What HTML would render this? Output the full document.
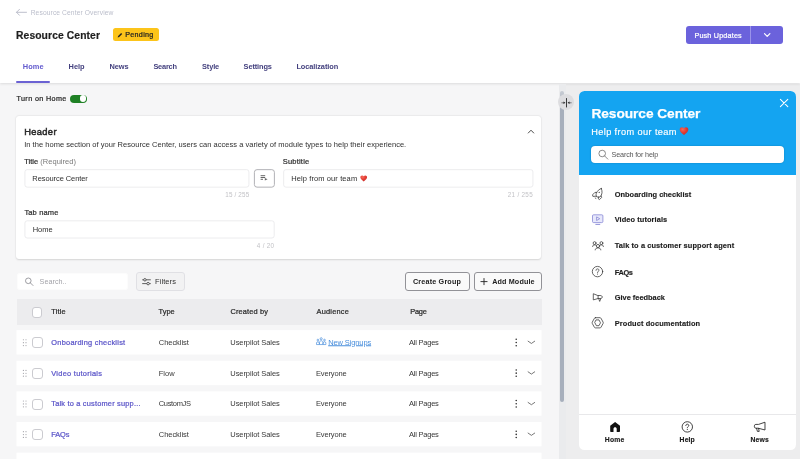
<!DOCTYPE html>
<html lang="en"><head>
<meta charset="utf-8">
<title>Resource Center</title>
<style>
*{box-sizing:border-box;margin:0;padding:0}
html,body{width:800px;height:459px;overflow:hidden}
body{font-family:"Liberation Sans","DejaVu Sans",sans-serif;background:#f6f6f7;color:#333;position:relative;font-size:7.2px}
.abs{position:absolute;white-space:nowrap}
.t{position:absolute;white-space:nowrap;line-height:1;transform:translateY(-50%);margin-top:.8px}
.sb{-webkit-text-stroke:.22px currentColor}
#hdr{left:0;top:0;width:800px;height:83px;background:#fff;box-shadow:0 .5px 2.5px rgba(0,0,0,.11)}
.tab{font-weight:bold;font-size:7.4px;color:#44417f}
.card{background:#fff;border-radius:3px;box-shadow:0 .6px 2px rgba(0,0,0,.13),0 0 2px rgba(0,0,0,.07)}
.inp{background:#fff;border:1px solid #eeeeef;border-radius:2.5px}
.lbl{font-size:7.5px;color:#303030}
.cnt{font-size:6.3px;color:#c2c2c6}
.btn{background:#fafafa;border:1px solid #929297;border-radius:3px}
.row{left:16.5px;width:525px;height:24.4px;background:#fff}
.cell{font-size:7.5px;color:#383838}
.hc{font-size:7.4px;color:#2a2a2a}
.lnk{font-size:7.4px;color:#5a54c8}
.cb{width:10.9px;height:10.9px;border:1px solid #cbcbd0;border-radius:3px;background:#fff}
.li{font-weight:bold;font-size:7.4px;color:#1e1e1e;-webkit-text-stroke:.15px #1e1e1e}
.ft{font-weight:bold;font-size:6.8px;color:#1c1c1c;-webkit-text-stroke:.15px #1c1c1c}
</style>
</head>
<body>
<div id="app" style="position:absolute;left:0;top:0;width:800px;height:459px;will-change:transform">

<!-- ===== top header ===== -->
<div class="abs" id="hdr"></div>
<svg class="abs" style="left: 15px; top: 8px;" width="13" height="9" viewBox="-0.5 -0.3 13 9"><path d="M4 1 L1 4 L4 7 M1 4 H11" fill="none" stroke="#b5b8c6" stroke-width=".9" stroke-linecap="round" stroke-linejoin="round"></path></svg>
<div class="t" style="left: 30.7px; top: 12.3px; font-size: 6.7px; color: rgb(187, 190, 203); letter-spacing: 0.105px;">Resource Center Overview</div>
<div class="t" style="left: 16px; top: 35.2px; font-size: 10.3px; font-weight: bold; color: rgb(31, 31, 31); -webkit-text-stroke: 0.2px rgb(31, 31, 31); letter-spacing: 0.11px;">Resource Center</div>
<div class="abs" style="left:113.4px;top:28.1px;width:46px;height:13.4px;background:#fcc41a;border-radius:2.5px"></div>
<svg class="abs" style="left: 117px; top: 32px;" width="7" height="7" viewBox="-0.2 0 7 7"><path d="M0.5 5.5 L0.9 4 L3.9 1 L5 2.1 L2 5.1 Z" fill="#222"></path></svg>
<div class="t sb" style="left: 125.2px; top: 34.2px; font-size: 7.2px; color: rgb(34, 34, 34); letter-spacing: 0.294px;">Pending</div>

<div class="abs" style="left:686.2px;top:25.7px;width:97px;height:18.3px;background:#6b62dc;border-radius:3px"></div>
<div class="abs" style="left:749.7px;top:25.7px;width:.8px;height:18.3px;background:#9a93ea"></div>
<div class="t sb" style="left: 694.4px; top: 35.1px; font-size: 7.2px; color: rgb(255, 255, 255); letter-spacing: 0.195px;">Push Updates</div>
<svg class="abs" style="left: 763px; top: 32px;" width="9" height="7" viewBox="-0.2 -0.2 9 7"><path d="M1.3 1.4 L4 4.2 L6.7 1.4" fill="none" stroke="#fff" stroke-width="1.2" stroke-linecap="round" stroke-linejoin="round"></path></svg>

<div class="t tab" style="left: 22.8px; top: 66.4px; color: rgb(98, 90, 206); letter-spacing: 0.058px;">Home</div>
<div class="t tab" style="left: 68.6px; top: 66.4px; letter-spacing: -0.004px;">Help</div>
<div class="t tab" style="left: 109.6px; top: 66.4px; letter-spacing: -0.089px;">News</div>
<div class="t tab" style="left: 153.4px; top: 66.4px; letter-spacing: -0.21px;">Search</div>
<div class="t tab" style="left: 202.1px; top: 66.4px; letter-spacing: -0.149px;">Style</div>
<div class="t tab" style="left: 243.6px; top: 66.4px; letter-spacing: -0.121px;">Settings</div>
<div class="t tab" style="left: 296.4px; top: 66.4px; letter-spacing: -0.084px;">Localization</div>
<div class="abs" style="left:16.3px;top:80.7px;width:33.5px;height:2.1px;background:#6b62d3;border-radius:1px"></div>

<!-- ===== left panel ===== -->
<div class="t sb" style="left: 16.5px; top: 98.4px; font-size: 7.2px; color: rgb(38, 38, 38); letter-spacing: 0.375px;">Turn on Home</div>
<div class="abs" style="left:70.3px;top:94.6px;width:17px;height:8.4px;border-radius:4.2px;background:#1f8125"></div>
<div class="abs" style="left:79.7px;top:95.4px;width:6.8px;height:6.8px;border-radius:50%;background:#fff"></div>

<div class="abs card" style="left:16.2px;top:116.3px;width:525.3px;height:143.2px"></div>
<div class="t" style="left: 24.2px; top: 131.9px; font-size: 9.3px; color: rgb(42, 42, 42); -webkit-text-stroke: 0.5px rgb(42, 42, 42); letter-spacing: 0.364px;">Header</div>
<div class="t" style="left: 24.2px; top: 144.4px; font-size: 7.5px; color: rgb(48, 48, 48); letter-spacing: 0.031px;">In the home section of your Resource Center, users can access a variety of module types to help their experience.</div>
<svg class="abs" style="left: 527px; top: 128px;" width="9" height="7" viewBox="0 -0.4 9 7"><path d="M1.3 4.6 L4 1.8 L6.7 4.6" fill="none" stroke="#3a3a3a" stroke-width=".9" stroke-linecap="round" stroke-linejoin="round"></path></svg>

<svg class="abs" style="left:0;top:160px" width="560" height="90" viewBox="0 160 560 90"><g fill="#fff" stroke="#e7e7ea" stroke-width=".8"><rect x="24.9" y="169.65" width="224" height="17.5" rx="2.3"></rect><rect x="283.65" y="169.65" width="249.3" height="17.5" rx="2.3"></rect><rect x="24.9" y="220.8" width="249.3" height="17.2" rx="2.3"></rect><rect x="254.4" y="169.65" width="20" height="17.5" rx="2.6" stroke="#a9a9ae" stroke-width=".9"></rect></g></svg>
<div class="t lbl" style="left: 24.2px; top: 161.4px; letter-spacing: 0.021px;"><span class="sb">Title</span> <span style="color:#7a7a7a">(Required)</span></div>
<div class="t lbl" style="left: 32.3px; top: 178.7px; letter-spacing: -0.083px;">Resource Center</div>
<svg class="abs" style="left: 260px; top: 174px;" width="9" height="7" viewBox="-0.2 -0.8 9 7"><path d="M.4 .9 H5 M.4 2.7 H5 M.4 4.5 H2.8" fill="none" stroke="#666" stroke-width="1"></path><path d="M4.6 3.3 L7.4 4.5 L4.6 5.7 Z" fill="#666"></path></svg>
<div class="t cnt" style="left: 225.3px; top: 194.6px; letter-spacing: 0.165px;">15 / 255</div>

<div class="t lbl sb" style="left: 282.8px; top: 161.4px; letter-spacing: 0.196px;">Subtitle</div>
<div class="t lbl" style="left: 291.2px; top: 178.7px; letter-spacing: 0.103px;">Help from our team</div>
<svg class="abs" style="left: 360px; top: 175px;" width="8" height="7.4" viewBox="-0.2857 -0.2812 11.4286 10.4063"><defs><radialGradient id="hg" cx="35%" cy="28%" r="80%"><stop offset="0" stop-color="#f4695a"></stop><stop offset=".55" stop-color="#e23a32"></stop><stop offset="1" stop-color="#c22b28"></stop></radialGradient></defs><path d="M5 8.8 C2 6.4 0.2 4.8 0.2 2.7 C0.2 1.2 1.4 0.2 2.7 0.2 C3.6 0.2 4.5 0.7 5 1.5 C5.5 0.7 6.4 0.2 7.3 0.2 C8.6 0.2 9.8 1.2 9.8 2.7 C9.8 4.8 8 6.4 5 8.8 Z" fill="url(#hg)"></path></svg>
<div class="t cnt" style="left: 507.8px; top: 194.6px; letter-spacing: 0.298px;">21 / 255</div>

<div class="t lbl sb" style="left: 24.4px; top: 212.3px; letter-spacing: 0.142px;">Tab name</div>
<div class="t lbl" style="left: 32.7px; top: 229.6px; letter-spacing: -0.004px;">Home</div>
<div class="t cnt" style="left: 256.8px; top: 244.9px; letter-spacing: 0.315px;">4 / 20</div>

<!-- search / filter row -->
<div class="abs inp" style="left:16.5px;top:272.9px;width:111.4px;height:17.5px;border-color:#fcfcfc"></div>
<svg class="abs" style="left: 24px; top: 277px;" width="10" height="10" viewBox="-0.7 -0.2 10 10"><circle cx="3.6" cy="3.6" r="2.8" fill="none" stroke="#8c8c92" stroke-width=".85"></circle><path d="M5.7 5.7 L8.3 8.3" stroke="#8c8c92" stroke-width=".85" stroke-linecap="round"></path></svg>
<div class="t" style="left: 39.6px; top: 281.4px; font-size: 7.2px; color: rgb(163, 163, 169); letter-spacing: 0.029px;">Search..</div>
<div class="abs" style="left:136.2px;top:272.3px;width:48.8px;height:18.7px;background:#f2f2f3;border:1px solid #e0e0e4;border-radius:3px"></div>
<svg class="abs" style="left: 142px; top: 277px;" width="10" height="10" viewBox="0 -0.2 10 10"><path d="M.6 2.6 H8.4 M.6 6.4 H8.4" stroke="#444" stroke-width=".85" stroke-linecap="round"></path><circle cx="2.9" cy="2.6" r="1.25" fill="#f2f2f3" stroke="#444" stroke-width=".85"></circle><circle cx="6.1" cy="6.4" r="1.25" fill="#f2f2f3" stroke="#444" stroke-width=".85"></circle></svg>
<div class="t" style="left: 155px; top: 281.4px; font-size: 7.5px; color: rgb(51, 51, 51); letter-spacing: 0.089px;">Filters</div>

<div class="abs btn" style="left:404.6px;top:272.3px;width:65.2px;height:18.7px"></div>
<div class="t" style="left: 413px; top: 281.4px; font-size: 7.2px; font-weight: bold; color: rgb(34, 34, 34); letter-spacing: 0.179px;">Create Group</div>
<div class="abs btn" style="left:473.8px;top:272.3px;width:68px;height:18.7px"></div>
<svg class="abs" style="left: 480px; top: 278px;" width="8" height="8" viewBox="-0.5 -0.1 8 8"><path d="M3.5 .4 V6.6 M.4 3.5 H6.6" stroke="#222" stroke-width=".9" stroke-linecap="round"></path></svg>
<div class="t" style="left: 492.2px; top: 281.4px; font-size: 7.2px; font-weight: bold; color: rgb(34, 34, 34); letter-spacing: 0.145px;">Add Module</div>

<!-- table header -->
<div class="abs" style="left:16.5px;top:299px;width:525px;height:25.6px;background:#ececee"></div>
<div class="abs cb" style="left:31.5px;top:307.2px"></div>
<div class="t hc sb" style="left: 51.3px; top: 311.2px; letter-spacing: 0.181px;">Title</div>
<div class="t hc sb" style="left: 158.6px; top: 311.2px; letter-spacing: -0.009px;">Type</div>
<div class="t hc sb" style="left: 230.5px; top: 311.2px; letter-spacing: 0.141px;">Created by</div>
<div class="t hc sb" style="left: 316.6px; top: 311.2px; letter-spacing: 0.19px;">Audience</div>
<div class="t hc sb" style="left: 410.2px; top: 311.2px; letter-spacing: -0.219px;">Page</div>

<!--ROWS-->
<svg class="abs" style="left: 16px; top: 329px;" width="527" height="28" viewBox="0 -0.1 527 28"><rect x=".5" y="1" width="525" height="24.4" fill="#fff"></rect></svg>
<svg class="abs" style="left: 22px; top: 338px;" width="6" height="9" viewBox="-0.4 -0.65 6 9"><g fill="#a2a2a8"><circle cx="1" cy="1.1" r=".6"></circle><circle cx="1" cy="4" r=".6"></circle><circle cx="1" cy="6.9" r=".6"></circle><circle cx="3.6" cy="1.1" r=".6"></circle><circle cx="3.6" cy="4" r=".6"></circle><circle cx="3.6" cy="6.9" r=".6"></circle></g></svg>
<div class="abs cb" style="left:31.7px;top:337.35px"></div>
<div class="t lnk sb" style="left: 51.3px; top: 342.25px; letter-spacing: 0.255px;">Onboarding checklist</div>
<div class="t cell" style="left: 158.8px; top: 342.25px; letter-spacing: -0.051px;">Checklist</div>
<div class="t cell" style="left: 230.3px; top: 342.25px; letter-spacing: -0.066px;">Userpilot Sales</div>
<svg class="abs" style="left: 316px; top: 337px;" width="11.4" height="9" viewBox="0 -0.15 11.4 9"><g fill="none" stroke="#4a8fdc" stroke-width=".7" stroke-linejoin="round"><circle cx="5.2" cy="1.6" r="1.05"></circle><path d="M3.5 7.4 V5.3 C3.5 4.3 4.2 3.6 5.2 3.6 C6.2 3.6 6.9 4.3 6.9 5.3 V7.4 Z"></path><circle cx="1.9" cy="2.9" r=".85"></circle><path d="M.5 7.4 V5.9 C.5 5.1 1.1 4.6 1.9 4.6 C2.7 4.6 3.3 5.1 3.3 5.9 V7.4 Z"></path><circle cx="8.5" cy="2.9" r=".85"></circle><path d="M7.1 7.4 V5.9 C7.1 5.1 7.7 4.6 8.5 4.6 C9.3 4.6 9.9 5.1 9.9 5.9 V7.4 Z"></path></g></svg>
<div class="t" style="left: 328.2px; top: 342.25px; font-size: 7.5px; color: rgb(74, 143, 220); text-decoration: underline 0.5px; text-underline-offset: 0.4px; letter-spacing: -0.115px;">New Signups</div>
<div class="t cell" style="left: 409px; top: 342.25px; letter-spacing: -0.228px;">All Pages</div>
<svg class="abs" style="left: 514px; top: 338px;" width="4" height="10" viewBox="-0.7 -0.05 4 10"><g fill="#2a2a2a"><circle cx="1.5" cy="1.25" r=".78"></circle><circle cx="1.5" cy="4.45" r=".78"></circle><circle cx="1.5" cy="7.65" r=".78"></circle></g></svg>
<svg class="abs" style="left: 527px; top: 340px;" width="10" height="6" viewBox="0 -0.25 10 6"><path d="M1.1 .95 L4.4 3.2 L7.7 .95" fill="none" stroke="#4a4a4a" stroke-width=".75" stroke-linecap="round" stroke-linejoin="round"></path></svg>
<svg class="abs" style="left: 16px; top: 359px;" width="527" height="28" viewBox="0 -0.73 527 28"><rect x=".5" y="1" width="525" height="24.4" fill="#fff"></rect></svg>
<svg class="abs" style="left: 22px; top: 369px;" width="6" height="9" viewBox="-0.4 -0.28 6 9"><g fill="#a2a2a8"><circle cx="1" cy="1.1" r=".6"></circle><circle cx="1" cy="4" r=".6"></circle><circle cx="1" cy="6.9" r=".6"></circle><circle cx="3.6" cy="1.1" r=".6"></circle><circle cx="3.6" cy="4" r=".6"></circle><circle cx="3.6" cy="6.9" r=".6"></circle></g></svg>
<div class="abs cb" style="left:31.7px;top:367.98px"></div>
<div class="t lnk sb" style="left: 51.3px; top: 372.88px; letter-spacing: 0.279px;">Video tutorials</div>
<div class="t cell" style="left: 158.8px; top: 372.88px; letter-spacing: -0.027px;">Flow</div>
<div class="t cell" style="left: 230.3px; top: 372.88px; letter-spacing: -0.066px;">Userpilot Sales</div>
<div class="t cell" style="left: 316px; top: 372.88px; letter-spacing: -0.158px;">Everyone</div>
<div class="t cell" style="left: 409px; top: 372.88px; letter-spacing: -0.228px;">All Pages</div>
<svg class="abs" style="left: 514px; top: 368px;" width="4" height="10" viewBox="-0.7 -0.68 4 10"><g fill="#2a2a2a"><circle cx="1.5" cy="1.25" r=".78"></circle><circle cx="1.5" cy="4.45" r=".78"></circle><circle cx="1.5" cy="7.65" r=".78"></circle></g></svg>
<svg class="abs" style="left: 527px; top: 370px;" width="10" height="6" viewBox="0 -0.88 10 6"><path d="M1.1 .95 L4.4 3.2 L7.7 .95" fill="none" stroke="#4a4a4a" stroke-width=".75" stroke-linecap="round" stroke-linejoin="round"></path></svg>
<svg class="abs" style="left: 16px; top: 390px;" width="527" height="28" viewBox="0 -0.36 527 28"><rect x=".5" y="1" width="525" height="24.4" fill="#fff"></rect></svg>
<svg class="abs" style="left: 22px; top: 399px;" width="6" height="9" viewBox="-0.4 -0.91 6 9"><g fill="#a2a2a8"><circle cx="1" cy="1.1" r=".6"></circle><circle cx="1" cy="4" r=".6"></circle><circle cx="1" cy="6.9" r=".6"></circle><circle cx="3.6" cy="1.1" r=".6"></circle><circle cx="3.6" cy="4" r=".6"></circle><circle cx="3.6" cy="6.9" r=".6"></circle></g></svg>
<div class="abs cb" style="left:31.7px;top:398.61px"></div>
<div class="t lnk sb" style="left: 51.3px; top: 403.51px; letter-spacing: 0.197px;">Talk to a customer supp...</div>
<div class="t cell" style="left: 158.8px; top: 403.51px; letter-spacing: -0.346px;">CustomJS</div>
<div class="t cell" style="left: 230.3px; top: 403.51px; letter-spacing: -0.066px;">Userpilot Sales</div>
<div class="t cell" style="left: 316px; top: 403.51px; letter-spacing: -0.158px;">Everyone</div>
<div class="t cell" style="left: 409px; top: 403.51px; letter-spacing: -0.228px;">All Pages</div>
<svg class="abs" style="left: 514px; top: 399px;" width="4" height="10" viewBox="-0.7 -0.31 4 10"><g fill="#2a2a2a"><circle cx="1.5" cy="1.25" r=".78"></circle><circle cx="1.5" cy="4.45" r=".78"></circle><circle cx="1.5" cy="7.65" r=".78"></circle></g></svg>
<svg class="abs" style="left: 527px; top: 401px;" width="10" height="6" viewBox="0 -0.51 10 6"><path d="M1.1 .95 L4.4 3.2 L7.7 .95" fill="none" stroke="#4a4a4a" stroke-width=".75" stroke-linecap="round" stroke-linejoin="round"></path></svg>
<svg class="abs" style="left: 16px; top: 420px;" width="527" height="28" viewBox="0 -0.99 527 28"><rect x=".5" y="1" width="525" height="24.4" fill="#fff"></rect></svg>
<svg class="abs" style="left: 22px; top: 430px;" width="6" height="9" viewBox="-0.4 -0.54 6 9"><g fill="#a2a2a8"><circle cx="1" cy="1.1" r=".6"></circle><circle cx="1" cy="4" r=".6"></circle><circle cx="1" cy="6.9" r=".6"></circle><circle cx="3.6" cy="1.1" r=".6"></circle><circle cx="3.6" cy="4" r=".6"></circle><circle cx="3.6" cy="6.9" r=".6"></circle></g></svg>
<div class="abs cb" style="left:31.7px;top:429.24px"></div>
<div class="t lnk sb" style="left: 51.3px; top: 434.14px; letter-spacing: -0.138px;">FAQs</div>
<div class="t cell" style="left: 158.8px; top: 434.14px; letter-spacing: -0.051px;">Checklist</div>
<div class="t cell" style="left: 230.3px; top: 434.14px; letter-spacing: -0.066px;">Userpilot Sales</div>
<div class="t cell" style="left: 316px; top: 434.14px; letter-spacing: -0.158px;">Everyone</div>
<div class="t cell" style="left: 409px; top: 434.14px; letter-spacing: -0.228px;">All Pages</div>
<svg class="abs" style="left: 514px; top: 429px;" width="4" height="10" viewBox="-0.7 -0.94 4 10"><g fill="#2a2a2a"><circle cx="1.5" cy="1.25" r=".78"></circle><circle cx="1.5" cy="4.45" r=".78"></circle><circle cx="1.5" cy="7.65" r=".78"></circle></g></svg>
<svg class="abs" style="left: 527px; top: 432px;" width="10" height="6" viewBox="0 -0.14 10 6"><path d="M1.1 .95 L4.4 3.2 L7.7 .95" fill="none" stroke="#4a4a4a" stroke-width=".75" stroke-linecap="round" stroke-linejoin="round"></path></svg>
<svg class="abs" style="left: 16px; top: 451px;" width="527" height="28" viewBox="0 -0.62 527 28"><rect x=".5" y="1" width="525" height="24.4" fill="#fff"></rect></svg>
<!--/ROWS-->

<!-- scrollbar + divider + right panel -->
<div class="abs" style="left:564px;top:84px;width:236px;height:375px;background:#ededee;z-index:-1"></div>
<div class="abs" style="left:558.5px;top:84px;width:7.4px;height:375px;background:#eaebed"></div>
<div class="abs" style="left:560.2px;top:91px;width:3.6px;height:311px;background:linear-gradient(#c6cbd3 0,#c0c5ce 5px,#a7afbc 16px);border-radius:2px"></div>
<div class="abs" style="left:558.3px;top:93.9px;width:16px;height:16px;border-radius:50%;background:#dddde0"></div>
<svg class="abs" style="left: 560px; top: 97px;" width="13" height="12" viewBox="-0.5 0 13 12"><path d="M6 1.1 V10.4" stroke="#1a1a1a" stroke-width=".85"></path><path d="M.9 5.8 H3.4 M11.1 5.8 H8.6" stroke="#222" stroke-width=".55"></path><path d="M3 4.5 L4.9 5.8 L3 7.1 Z M9 4.5 L7.1 5.8 L9 7.1 Z" fill="#222"></path></svg>

<!-- widget -->
<div class="abs" style="left:578.8px;top:91.2px;width:217px;height:358.5px;background:#fff;border-radius:5.5px;overflow:hidden">
  <div class="abs" style="left:0;top:0;width:217px;height:83.9px;background:#14a4f1"></div>
  <div class="abs" style="left:0;top:322.8px;width:217px;height:.8px;background:#e8e8ea"></div>
</div>
<div class="t" style="left: 591.4px; top: 113.2px; font-size: 13.7px; font-weight: bold; color: rgb(255, 255, 255); -webkit-text-stroke: 0.25px rgb(255, 255, 255); letter-spacing: -0.038px;">Resource Center</div>
<div class="t" style="left: 591.2px; top: 132px; font-size: 9.2px; color: rgb(255, 255, 255); -webkit-text-stroke: 0.15px rgb(255, 255, 255); letter-spacing: 0.392px;">Help from our team</div>
<svg class="abs" style="left: 679px; top: 127px;" width="10" height="9.1" viewBox="-0.5556 0 11.1111 10.1111"><path d="M5 8.8 C2 6.4 0.2 4.8 0.2 2.7 C0.2 1.2 1.4 0.2 2.7 0.2 C3.6 0.2 4.5 0.7 5 1.5 C5.5 0.7 6.4 0.2 7.3 0.2 C8.6 0.2 9.8 1.2 9.8 2.7 C9.8 4.8 8 6.4 5 8.8 Z" fill="url(#hg)"></path></svg>
<svg class="abs" style="left: 779px; top: 98px;" width="10" height="10" viewBox="-0.6 -0.5 10 10"><path d="M.8 .8 L8.2 8.2 M8.2 .8 L.8 8.2" stroke="#fff" stroke-width="1.05" stroke-linecap="round"></path></svg>
<div class="abs" style="left:590.7px;top:145.8px;width:193.5px;height:17.2px;background:#fff;border-radius:4px;box-shadow:0 0 1.5px rgba(0,0,0,.3)"></div>
<svg class="abs" style="left: 598px; top: 149px;" width="11" height="11" viewBox="-0.2 -0.5 11 11"><circle cx="4" cy="4" r="3.3" fill="none" stroke="#666" stroke-width=".75"></circle><path d="M6.4 6.4 L9.6 9.6" stroke="#666" stroke-width=".75" stroke-linecap="round"></path></svg>
<div class="t" style="left: 611.6px; top: 154.6px; font-size: 7.2px; color: rgb(85, 85, 85); letter-spacing: -0.155px;">Search for help</div>

<!--ICONS-->
<svg class="abs" style="left:590px;top:186px" width="14" height="16" viewBox="0 0 14 16"><g fill="none" stroke="#333" stroke-width=".75" stroke-linecap="round" stroke-linejoin="round"><path d="M11.3 2.5 C9.5 2.9 7 5 6.2 7.6 C5.9 8.8 6.2 10 6.9 11 L10 11 C11 10 11.8 8.5 12 6.5 C12.1 5 11.8 3.6 11.3 2.5 Z"></path><path d="M6.5 6.6 L5 6.3 L2.5 8.9 L2.9 10.4 L6.3 10.2"></path><path d="M8.7 11 L8.3 12.8 L9.5 13.6 L11.6 11.5 L11.2 9.9"></path><path d="M5.2 12 L5.9 12.4"></path></g><circle cx="9.2" cy="6.3" r=".65" fill="#333"></circle></svg>
<svg class="abs" style="left:591px;top:213px" width="14" height="13" viewBox="0 0 14 13"><rect x="1.5" y="1.8" width="10.4" height="7.8" rx="1.1" fill="#e7e8fb" stroke="#8182d3" stroke-width=".75"></rect><path d="M5.6 3.9 L8.7 5.7 L5.6 7.5 Z" fill="#f3f3fd" stroke="#6f71cc" stroke-width=".65" stroke-linejoin="round"></path><path d="M4.8 11.4 H8.8" stroke="#7375cf" stroke-width=".8" stroke-linecap="round"></path></svg>
<svg class="abs" style="left:591px;top:240px" width="14" height="11" viewBox="0 0 14 11"><g fill="none" stroke="#333" stroke-width=".75" stroke-linecap="round" stroke-linejoin="round"><circle cx="7" cy="6" r="1.6"></circle><path d="M4.2 9.9 C4.2 8.5 5.4 7.9 7 7.9 C8.6 7.9 9.8 8.5 9.8 9.9"></path><circle cx="3.6" cy="3.1" r="1.45"></circle><path d="M1.6 6.5 C1.6 5.4 2.4 4.9 3.6 4.9 C4.1 4.9 4.5 5 4.8 5.2"></path><circle cx="10.4" cy="3.1" r="1.45"></circle><path d="M12.4 6.5 C12.4 5.4 11.6 4.9 10.4 4.9 C9.9 4.9 9.5 5 9.2 5.2"></path></g></svg>
<svg class="abs" style="left: 591px; top: 265px;" width="13" height="13" viewBox="-0.5 -0.6 13 13"><circle cx="6" cy="6" r="5.2" fill="none" stroke="#333" stroke-width=".75" stroke-linecap="round" stroke-linejoin="round"></circle><path d="M4.5 4.7 C4.5 3.8 5.2 3.3 6 3.3 C6.9 3.3 7.5 3.9 7.5 4.6 C7.5 5.6 6 5.7 6 6.9" fill="none" stroke="#333" stroke-width=".75" stroke-linecap="round" stroke-linejoin="round"></path><circle cx="6" cy="8.5" r=".5" fill="#333"></circle></svg>
<svg class="abs" style="left: 592px; top: 293px;" width="12" height="10" viewBox="-0.5 -0.2 12 10"><g fill="none" stroke="#333" stroke-width=".75" stroke-linecap="round" stroke-linejoin="round"><path d="M.8 .9 V6.7 L5.6 5.3 H7.6 C8.9 5.3 9.8 4.6 9.8 3.8 C9.8 3 8.9 2.3 7.6 2.3 H5.6 Z"></path><path d="M5.6 2.3 V5.3"></path><path d="M6.2 5.5 L7.2 8.2 L8.3 5.4"></path></g></svg>
<svg class="abs" style="left: 591px; top: 317px;" width="13.4" height="12.6" viewBox="-0.5 0 13.4 12.6"><g fill="none" stroke="#333" stroke-width=".75" stroke-linecap="round" stroke-linejoin="round"><path d="M3.9 .7 H8.5 C8.9 .7 9.3 .9 9.5 1.3 L11.6 5.1 C11.8 5.5 11.8 6.1 11.6 6.5 L9.5 10.3 C9.3 10.7 8.9 10.9 8.5 10.9 H3.9 C3.5 10.9 3.1 10.7 2.9 10.3 L.8 6.5 C.6 6.1 .6 5.5 .8 5.1 L2.9 1.3 C3.1 .9 3.5 .7 3.9 .7 Z"></path><path d="M4.9 2.9 H7.5 L9 5.8 L7.5 8.7 H4.9 L3.4 5.8 Z"></path></g></svg>
<svg class="abs" style="left: 609px; top: 421px;" width="12" height="12" viewBox="-0.6 -0.4 12 12"><path d="M5.5 .5 L.6 4.3 V9.6 C.6 10.2 1 10.6 1.6 10.6 H3.9 V7.4 C3.9 6.5 4.6 5.9 5.5 5.9 C6.4 5.9 7.1 6.5 7.1 7.4 V10.6 H9.4 C10 10.6 10.4 10.2 10.4 9.6 V4.3 Z" fill="#111"></path></svg>
<svg class="abs" style="left: 681px; top: 420px;" width="13" height="13" viewBox="-0.3 -0.9 13 13"><circle cx="6" cy="6" r="5.2" fill="none" stroke="#222" stroke-width=".85"></circle><path d="M4.5 4.7 C4.5 3.8 5.2 3.3 6 3.3 C6.9 3.3 7.5 3.9 7.5 4.6 C7.5 5.6 6 5.7 6 6.9" fill="none" stroke="#222" stroke-width=".85" stroke-linecap="round"></path><circle cx="6" cy="8.6" r=".55" fill="#222"></circle></svg>
<svg class="abs" style="left: 753px; top: 421px;" width="13.4" height="11.6" viewBox="-0.6 -0.8 13.4 11.6"><g fill="none" stroke="#222" stroke-width=".85" stroke-linejoin="round" stroke-linecap="round"><path d="M11.4 .8 V8.2 L4.6 6.4 H2.2 C1.4 6.4 .8 5.8 .8 5 V4 C.8 3.2 1.4 2.6 2.2 2.6 H4.6 Z"></path><path d="M3 6.6 L3.8 9.6 H5.6 L5 6.6"></path></g></svg>
<!--/ICONS-->

<div class="t li" style="left: 614.7px; top: 194.2px; letter-spacing: 0.047px;">Onboarding checklist</div>
<div class="t li" style="left: 614.7px; top: 219.3px; letter-spacing: 0.089px;">Video tutorials</div>
<div class="t li" style="left: 614.7px; top: 245.5px; letter-spacing: 0.109px;">Talk to a customer support agent</div>
<div class="t li" style="left: 614.7px; top: 271.9px; letter-spacing: -0.375px;">FAQs</div>
<div class="t li" style="left: 614.7px; top: 297.1px; letter-spacing: 0.01px;">Give feedback</div>
<div class="t li" style="left: 614.7px; top: 323px; letter-spacing: 0.124px;">Product documentation</div>

<div class="t ft" style="left: 604.8px; top: 439.4px; letter-spacing: 0.203px;">Home</div>
<div class="t ft" style="left: 679.6px; top: 439.4px; letter-spacing: 0.133px;">Help</div>
<div class="t ft" style="left: 750.4px; top: 439.4px; letter-spacing: 0.181px;">News</div>

</div>

</body></html>
